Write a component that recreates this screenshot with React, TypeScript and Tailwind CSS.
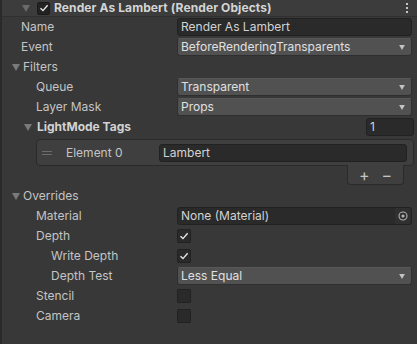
import React from 'react';

const font = { fontFamily: 'Inter, "Noto Sans", sans-serif' };

function Tri({ className = '' }: { className?: string }) {
  return (
    <svg width="8" height="7" viewBox="0 0 8 7" className={className}>
      <path d="M0 0 H8 L4 7 Z" fill="currentColor" />
    </svg>
  );
}

function Check() {
  return (
    <svg width="10" height="10" viewBox="0 0 10 10">
      <path d="M1.5 5.2 L4 7.6 L8.6 2.2" stroke="#e6e6e6" strokeWidth="1.4" fill="none" />
    </svg>
  );
}

function Checkbox({ checked }: { checked?: boolean }) {
  return (
    <div className="w-[14px] h-[14px] rounded-[2px] bg-[#2a2a2a] border border-[#212121] flex items-center justify-center">
      {checked && <Check />}
    </div>
  );
}

function TextField({ value }: { value: string }) {
  return (
    <div className="h-[18px] flex-1 rounded-[3px] bg-[#2a2a2a] border border-[#212121] px-[3px] flex items-center text-[#d2d2d2]">
      {value}
    </div>
  );
}

function Dropdown({ value }: { value: string }) {
  return (
    <div className="h-[18px] flex-1 rounded-[3px] bg-[#515151] border border-[#2f2f2f] border-t-[#585858] pl-[3px] pr-[5px] flex items-center justify-between text-[#e0e0e0]">
      <span>{value}</span>
      <Tri className="text-[#c4c4c4] w-[8px] h-[5px]" />
    </div>
  );
}

function Row({ label, indent = 21, children }: { label: string; indent?: number; children?: React.ReactNode }) {
  return (
    <div className="h-5 flex items-center">
      <div className="w-[175px] shrink-0 text-[#c4c4c4]" style={{ paddingLeft: indent }}>
        {label}
      </div>
      <div className="flex-1 flex items-center pr-[5px]">{children}</div>
    </div>
  );
}

function Section({ label }: { label: string }) {
  return (
    <div className="h-5 flex items-center pl-[10px] gap-[3px] text-[#c4c4c4]">
      <Tri className="text-[#7a7a7a]" />
      <span>{label}</span>
    </div>
  );
}

export default function App() {
  return (
    <div className="w-[417px] h-[344px] bg-[#383838] border-l-2 border-[#2a2a2a] text-[12px] overflow-hidden" style={font}>
      <div className="h-[17px] bg-[#3c3c3c] border-b border-[#303030] flex items-center pl-[20px] pr-[9px]">
        <Tri className="text-[#6a6a6a]" />
        <div className="ml-[7px] w-[13px] h-[13px] rounded-[2px] bg-[#222222] border border-[#1a1a1a] flex items-center justify-center">
          <Check />
        </div>
        <span className="ml-[4px] font-bold text-[#d4d4d4] tracking-[0.1px]">Render As Lambert (Render Objects)</span>
        <div className="ml-auto flex flex-col gap-[1.5px]">
          <div className="w-[2.5px] h-[2.5px] bg-[#c4c4c4]" />
          <div className="w-[2.5px] h-[2.5px] bg-[#c4c4c4]" />
          <div className="w-[2.5px] h-[2.5px] bg-[#c4c4c4]" />
        </div>
      </div>

      <div>
        <Row label="Name" indent={19}>
          <TextField value="Render As Lambert" />
        </Row>
        <Row label="Event" indent={19}>
          <Dropdown value="BeforeRenderingTransparents" />
        </Row>
        <Section label="Filters" />
        <Row label="Queue" indent={34}>
          <Dropdown value="Transparent" />
        </Row>
        <Row label="Layer Mask" indent={34}>
          <Dropdown value="Props" />
        </Row>
        <div className="h-5 flex items-center pl-[22px] pr-[3px]">
          <Tri className="text-[#7a7a7a]" />
          <span className="ml-[5px] font-bold text-[#d2d2d2]">LightMode Tags</span>
          <div className="ml-auto w-[48px] h-[18px] rounded-[3px] bg-[#2a2a2a] border border-[#212121] px-[3px] flex items-center text-[#d2d2d2]">
            1
          </div>
        </div>
        <div className="ml-[34px] mr-[3px] mt-[2px] h-[27px] rounded-[4px] bg-[#3f3f3f] border border-[#2a2a2a] flex items-center pr-[6px]">
          <div className="w-[20px] flex flex-col items-center gap-[2px]">
            <div className="w-[10px] h-[1px] bg-[#6c6c6c]" />
            <div className="w-[10px] h-[1px] bg-[#6c6c6c]" />
          </div>
          <div className="ml-[9px] w-[93px] text-[#c4c4c4]">Element 0</div>
          <TextField value="Lambert" />
        </div>
        <div className="flex justify-end pr-[13px] -mt-[1px]">
          <div className="w-[57px] h-[20px] rounded-b-[4px] bg-[#3f3f3f] border border-t-0 border-[#2a2a2a] flex items-center justify-between px-[11px] text-[#c4c4c4] text-[16px] leading-none">
            <span>+</span>
            <span>−</span>
          </div>
        </div>
        <div className="mt-[1px]">
          <Section label="Overrides" />
        </div>
        <Row label="Material" indent={34}>
          <div className="h-[18px] flex-1 rounded-[3px] bg-[#2a2a2a] border border-[#212121] pl-[3px] flex items-center justify-between text-[#d2d2d2]">
            <span>None (Material)</span>
            <div className="w-[16px] h-full bg-[#303030] rounded-r-[3px] flex items-center justify-center">
              <svg width="10" height="10" viewBox="0 0 10 10">
                <circle cx="5" cy="5" r="4" stroke="#b4b4b4" strokeWidth="1.1" fill="none" />
                <circle cx="5" cy="5" r="1.6" fill="#b4b4b4" />
              </svg>
            </div>
          </div>
        </Row>
        <Row label="Depth" indent={34}>
          <Checkbox checked />
        </Row>
        <Row label="Write Depth" indent={49}>
          <Checkbox checked />
        </Row>
        <Row label="Depth Test" indent={49}>
          <Dropdown value="Less Equal" />
        </Row>
        <Row label="Stencil" indent={34}>
          <Checkbox />
        </Row>
        <Row label="Camera" indent={34}>
          <Checkbox />
        </Row>
      </div>
    </div>
  );
}
